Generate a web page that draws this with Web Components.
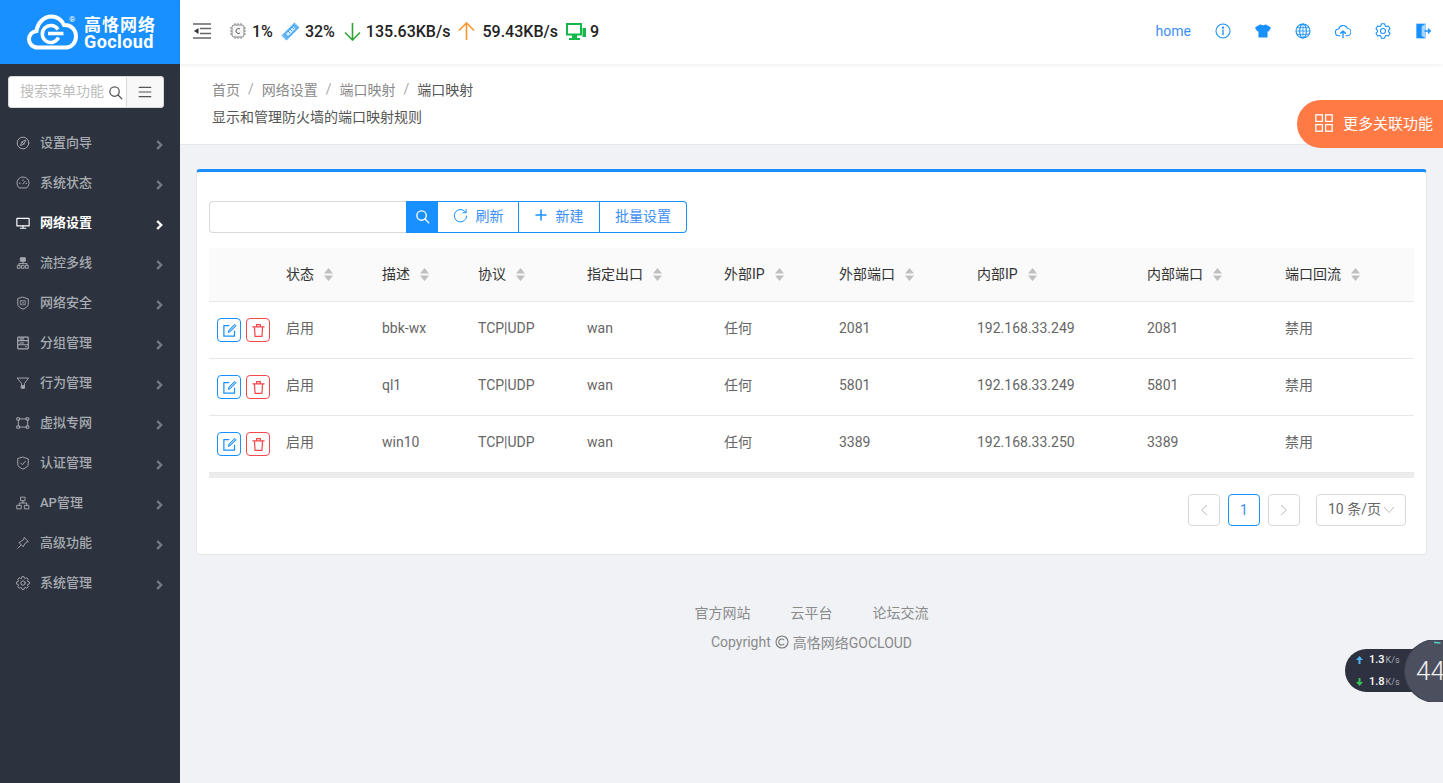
<!DOCTYPE html>
<html lang="zh"><head><meta charset="utf-8"><title>端口映射</title>
<style>
html,body{margin:0;height:783px;overflow:hidden;background:#f0f2f6;font-family:Roboto,"Noto Sans CJK SC",sans-serif;}
</style></head><body>
<gc-app></gc-app>
<script>
const FONT='Roboto,"Noto Sans CJK SC",sans-serif';
function el(name,html){customElements.define(name,class extends HTMLElement{constructor(){super();this.attachShadow({mode:'open'}).innerHTML=typeof html==='function'?html(this):html;}});}
const svg=(p,s=16,vb=24,extra='')=>`<svg width="${s}" height="${s}" viewBox="0 0 ${vb} ${vb}" fill="none" stroke="currentColor" stroke-width="1.6" stroke-linecap="round" stroke-linejoin="round" ${extra}>${p}</svg>`;
function cog(n,ri,ro,hole){let d='';for(let i=0;i<n;i++){const a=i*2*Math.PI/n-Math.PI/2,w=Math.PI/n;[[ri,a-w*.8],[ro,a-w*.42],[ro,a+w*.42],[ri,a+w*.8]].forEach(([r,t],j)=>{d+=(d?'L':'M')+(12+r*Math.cos(t)).toFixed(2)+' '+(12+r*Math.sin(t)).toFixed(2);});}return `<path d="${d}z"/><circle cx="12" cy="12" r="${hole}"/>`;}
const navIcons={
compass:'<circle cx="12" cy="12" r="10"/><path d="M16.5 7.5l-2.8 6.2-6.2 2.8 2.8-6.2z"/><path d="M10.3 10.3l3.4 3.4"/>',
gauge:'<path d="M5 20a10.500 10.500 0 1 1 14 0z"/><path d="M12 13.500l3.500-4.500M5.500 12.500h1.500M12 6.500v1.500M17 12.500h1.500"/>',
monitor:'<rect x="1.500" y="4" width="21" height="13" rx=".5" stroke-width="2"/><path d="M12 17v4M7.500 21h9" stroke-width="2"/>',
flow:'<rect x="8" y="3" width="8" height="6" fill="currentColor"/><path d="M12 9v4M5 16v-3h14v3"/><rect x="3" y="16" width="4" height="5"/><rect x="10" y="16" width="4" height="5"/><rect x="17" y="16" width="4" height="5"/>',
shield:'<path d="M12 2l9 3v9c0 4-4 6.500-9 8.500C7 20.500 3 18 3 14V5z"/><path d="M8 8h8v7H8z" stroke-width="1.200"/><path d="M10 10l4 3M14 10l-4 3" stroke-width="1"/>',
group:'<rect x="3" y="2" width="18" height="20" rx="1" stroke-width="2"/><path d="M3 8h18M3 15h18M7 5h6M7 12h6" stroke-width="2"/><path d="M16 18.500h2"/>',
filter:'<path d="M2.500 3.500h19L14.500 13v4h-5v-4z"/><rect x="9.500" y="17" width="5" height="4" fill="currentColor"/>',
vpn:'<rect x="2" y="3" width="4" height="4"/><rect x="18" y="3" width="4" height="4"/><rect x="2" y="17" width="4" height="4"/><rect x="18" y="17" width="4" height="4"/><path d="M6 5h12M6 19h12M4 7v10M20 7v10"/>',
check:'<path d="M12 2l9 3v9c0 4-4 6.500-9 8.500C7 20.500 3 18 3 14V5z"/><path d="M8 12l3 3 5-6"/>',
ap:'<rect x="8.500" y="2" width="7" height="6"/><rect x="2" y="16" width="7" height="6"/><rect x="15" y="16" width="7" height="6"/><path d="M12 8v4M5.500 16v-4h13v4"/>',
pin:'<path d="M14.500 3l6.500 6.500-4 1.500-3.500 5-1 2.500-7.500-7.500 2.500-1 5-3.500z"/><path d="M8 16l-5 5"/>',
gear:cog(8,8.500,11,3.800)
};
el('gc-logo',`<style>:host{display:flex;flex:none;align-items:center;gap:6px;height:64px;width:180px;background:#1890ff;color:#fff;font-family:${FONT};box-sizing:border-box;padding:0 0 0 27px;position:relative}
.t{display:flex;flex-direction:column;font-weight:700;margin-top:1px}.a{font-size:17px;letter-spacing:1px;line-height:18px;white-space:nowrap}.b{font-size:18px;line-height:15px;letter-spacing:.4px}
sup{position:absolute;font-size:8px;left:69px;top:15px;font-weight:400;line-height:10px;margin:0}</style>
<svg width="51" height="36" viewBox="0 0 51 36" fill="none" stroke="#fff" stroke-width="4"><path d="M10.500 33.500C5.500 33.500 2 29.500 2 25.500c0-4.500 3-7.800 7.500-8.500C10.500 9 17 2.500 24 2.500c5.800 0 10.500 3 13 8.500 6-.5 12 4 12 11.500 0 6-4.500 11-10 11z"/><path d="M31 15.500a8.500 8.500 0 1 0 .5 8" stroke-width="3.500"/><path d="M21 19.500h15.500" stroke-width="3.500"/></svg>
<sup>®</sup><div class="t"><span class="a">高恪网络</span><span class="b">Gocloud</span></div>`);
el('gc-search',`<style>:host{display:block;margin:12px 16px 15px 8px;height:32px;font-family:${FONT}}
.b{display:flex;height:32px;background:#fff;border:1px solid #d9d9d9;border-radius:3px;box-sizing:border-box;align-items:center;color:#555;overflow:hidden}
.p{font-size:14px;color:#bcbcbc;width:84px;overflow:hidden;white-space:nowrap;margin-left:11px;flex:none;line-height:26px;padding-bottom:2px;height:26px}
.i{width:22px;display:flex;justify-content:center;flex:none}.m{flex:1;display:flex;justify-content:center;align-items:center;border-left:1px solid #d9d9d9;height:100%;background:#f8f8f8}</style>
<div class="b"><span class="p">搜索菜单功能</span><span class="i">${svg('<circle cx="10.500" cy="10.500" r="7.500" stroke-width="2"/><path d="M16 16l6 6" stroke-width="2"/>',15)}</span><span class="m">${svg('<path d="M2 4h20M2 12h20M2 20h20" stroke-width="2"/>',14)}</span></div>`);
el('gc-nav-item',h=>`<style>:host{display:flex;align-items:center;height:40px;padding-left:16px;font-family:${FONT};font-size:13px;color:${h.hasAttribute('active')?'#fff':'#a8acb2'};font-weight:${h.hasAttribute('active')?700:500};box-sizing:border-box}
svg.ic{flex:none;margin-right:10px}span{flex:1;padding-bottom:3px}.c{color:${h.hasAttribute('active')?'#fff':'#767c84'};margin:4px 17px 0 0}</style>
${svg(navIcons[h.getAttribute('icon')],14,24,'class="ic"')}<span><slot></slot></span><svg class="c" width="7" height="10" viewBox="0 0 7 10" fill="none" stroke="currentColor" stroke-width="2.400"><path d="M1.200 1l4 4-4 4"/></svg>`);
el('gc-sidebar',`<style>:host{display:flex;flex-direction:column;width:180px;flex:none;height:783px;background:#2c333e}.n{display:flex;flex-direction:column}</style>
<gc-logo></gc-logo><gc-search></gc-search><div class="n">${[['compass','设置向导'],['gauge','系统状态'],['monitor','网络设置',1],['flow','流控多线'],['shield','网络安全'],['group','分组管理'],['filter','行为管理'],['vpn','虚拟专网'],['check','认证管理'],['ap','AP管理'],['pin','高级功能'],['gear','系统管理']].map(([i,t,a])=>`<gc-nav-item icon="${i}" ${a?'active':''}>${t}</gc-nav-item>`).join('')}</div>`);
el('gc-stat',`<style>:host{display:inline-flex;align-items:center;gap:5px;font-size:16px;font-weight:500;color:#222;white-space:nowrap}</style><slot name="i"></slot><slot></slot>`);
const blue='#1890ff';
const topIcons=[
'<circle cx="12" cy="12" r="10.500"/><path d="M12 10.500v7" stroke-width="2"/><circle cx="12" cy="7" r=".8" fill="currentColor"/>',
'<path d="M8 3l4 1.500L16 3l7 4-3 5-2-1v10H6V11l-2 1-3-5z" fill="currentColor"/>',
'<circle cx="12" cy="12" r="10.500"/><ellipse cx="12" cy="12" rx="5" ry="10.500"/><path d="M12 2v20M2 12h20M3.500 7h17M3.500 17h17" stroke-width="1.200"/>',
'<path d="M7.500 19H6a5 5 0 0 1-.6-10 7 7 0 0 1 13.200-1A5.500 5.500 0 0 1 18 19h-1.500"/><path d="M12 22v-10M8.500 15.500L12 12l3.500 3.500" stroke-width="2"/>',
cog(6,8.200,11,3.800),
'<path d="M2 1h14v22H2z" fill="currentColor" stroke="none"/><path d="M10 5l6-4v22l-6-4z" fill="#a9d6ff" stroke="none"/><path d="M15 12h8M20 9l3 3-3 3" stroke-width="2"/>'];
el('gc-topbar',`<style>:host{display:flex;align-items:center;height:64px;flex:none;background:#fff;box-shadow:0 1px 4px rgba(0,21,41,.08);position:relative;z-index:2;font-family:${FONT};padding:0 0 2px 13px;box-sizing:border-box}
.s{display:flex;align-items:center;gap:9px;margin-left:18px}.sp{flex:1}.h{font-size:14px;color:#3d8ff5;margin-right:12px}.r{display:flex;color:${blue}}.r>span{width:40px;display:flex;justify-content:center}</style>
<svg width="18" height="16" viewBox="0 0 18 16" fill="none" stroke="#666" stroke-width="1.700"><path d="M0 1h18M7 5.500h11M7 10.500h11M0 15h18"/><path d="M1 8l4.500-3v6z" fill="#333" stroke="none"/></svg>
<div class="s">
<gc-stat><svg slot="i" width="18" height="18" viewBox="0 0 18 18" fill="none" stroke="#888" stroke-width="1"><rect x="3" y="3" width="12" height="12" rx="2" fill="#f6f6f6"/><path d="M6 1v2M9 1v2M12 1v2M6 15v2M9 15v2M12 15v2M1 6h2M1 9h2M1 12h2M15 6h2M15 9h2M15 12h2"/><path d="M11 7a2.500 2.500 0 1 0 0 4" stroke="#555"/></svg>1%</gc-stat>
<gc-stat style="margin-left:-1px"><svg slot="i" width="19" height="19" viewBox="0 0 19 19"><path d="M13.500 .5L18.500 5.500 5.500 18.500.5 13.500z" fill="#59b0f7"/><path d="M12.500 4.500l2 2-7.500 7.500-2-2z" fill="#d8edff"/><path d="M7 9l2 2M9 7l2 2M11 5l2 2" stroke="#3a9bef" stroke-width="1"/><path d="M2.500 13.500l3 3M14.500 2.500l2 2" stroke="#d8edff" stroke-width=".8" stroke-dasharray="1 1"/></svg>32%</gc-stat>
<gc-stat style="gap:5px"><svg slot="i" width="17" height="19" viewBox="0 0 17 19" fill="none" stroke="#35a33a" stroke-width="1.600"><path d="M8.500 1v17M1 10.500l7.500 7.500 7.500-7.500"/></svg>135.63KB/s</gc-stat>
<gc-stat style="margin-left:-1px;gap:7px"><svg slot="i" width="17" height="19" viewBox="0 0 17 19" fill="none" stroke="#f7962b" stroke-width="1.600"><path d="M8.500 18V1M1 8.500L8.500 1 16 8.500"/></svg>59.43KB/s</gc-stat>
<gc-stat style="margin-left:-1px;gap:4px"><svg slot="i" width="20" height="17" viewBox="0 0 20 17"><path d="M1 1h14v10.500H1z" fill="none" stroke="#12b84a" stroke-width="2"/><path d="M16.500 5H20v9h-3.500zM3 15h11v2H3zM6 12h5v3H6z" fill="#12b84a"/></svg>9</gc-stat>
</div><span class="sp"></span><span class="h">home</span><div class="r">${topIcons.map(p=>`<span>${svg(p,16)}</span>`).join('')}</div>`);
el('gc-crumbs',`<style>:host{display:flex;flex-direction:column;flex:none;height:81px;box-sizing:border-box;background:#fff;border-bottom:1px solid #e6e6e6;padding:15px 0 0 32px;font-family:${FONT};font-size:14px;color:#8a8a8a;position:relative}
.l{display:flex;height:20px;align-items:center}i{font-style:normal;margin:0 8px;color:#aaa}.c{color:#555}.d{color:#555;margin-top:8px;height:20px;line-height:20px}</style>
<div class="l">首页<i>/</i>网络设置<i>/</i>端口映射<i>/</i><span class="c">端口映射</span></div><div class="d">显示和管理防火墙的端口映射规则</div>`);
el('gc-more',`<style>:host{position:absolute;right:0;top:100px;z-index:3;width:146px;height:48px;box-sizing:border-box;background:#ff7a45;color:#fff;border-radius:24px 0 0 24px;display:flex;align-items:center;padding:0 0 3px 18px;gap:10px;font:15px ${FONT};white-space:nowrap}</style>
<svg width="18" height="18" viewBox="0 0 18 18" fill="none" stroke="#fff" stroke-width="1.300"><rect x=".8" y=".8" width="6.600" height="6.600"/><rect x="10.600" y=".8" width="6.600" height="6.600"/><rect x=".8" y="10.600" width="6.600" height="6.600"/><rect x="10.600" y="10.600" width="6.600" height="6.600"/></svg>更多关联功能`);
el('gc-toolbar',`<style>:host{display:flex;height:32px;font:14px ${FONT};color:#3d8ff5;box-sizing:border-box}
.in{width:197px;border:1px solid #d9d9d9;border-right:0;border-radius:4px 0 0 4px;box-sizing:border-box;background:#fff}
.sb{width:32px;background:${blue};color:#fff;display:flex;align-items:center;justify-content:center;padding-bottom:2px;box-sizing:border-box}
.b{display:flex;align-items:center;justify-content:center;box-sizing:border-box;border:1px solid ${blue};border-left:0;height:32px;background:#fff;white-space:nowrap;padding-bottom:4px}.b svg{color:${blue}}.b:last-child{border-radius:0 4px 4px 0}</style>
<div class="in"></div><div class="sb">${svg('<circle cx="10.500" cy="10.500" r="7.500" stroke-width="2.200"/><path d="M16 16l6 6" stroke-width="2.200"/>',15)}</div>
<div class="b" style="width:81px;gap:8px">${svg('<path d="M20.500 7A10 10 0 1 0 22 13"/><path d="M21 2.500V7.500h-5" stroke-width="1.600"/>',15)}刷新</div>
<div class="b" style="width:81px;gap:9px">${svg('<path d="M12 2v20M2 12h20" stroke-width="3"/>',12)}新建</div>
<div class="b" style="width:87px">批量设置</div>`);
const cols='69px 96px 96px 109px 137px 115px 138px 170px 138px 137px';
el('gc-row',h=>`<style>:host{display:grid;grid-template-columns:${cols};align-items:center;height:57px;box-sizing:border-box;border-bottom:1px solid #e8e8e8;font:14px ${FONT};color:#666}
.c{padding:0 0 4px 8px;white-space:nowrap}.c.z{padding-bottom:6px}.a{display:flex;gap:5px;padding-left:8px}.b{width:24px;height:24px;box-sizing:border-box;border-radius:4px;border:1px solid;display:flex;align-items:center;justify-content:center}</style>
<div class="a"><span class="b" style="border-color:${blue};color:${blue}">${svg('<path d="M20 13v8H3V4h8" stroke-width="2"/><path d="M20.500 2.500l2 2L13 14l-3 1 1-3z" fill="#8ec8ff" stroke-width="1.500"/>',15)}</span><span class="b" style="border-color:#f5484d;color:#f5484d">${svg('<path d="M3 6h18M9 6V2.500h6V6M5.500 6l1 15.500h11l1-15.500" stroke-width="2"/>',15)}</span></div>
${h.getAttribute('v').split('|#').map(t=>`<div class="c${/[^\x00-\x7f]/.test(t)?' z':''}">${t}</div>`).join('')}`);
el('gc-table',`<style>:host{display:block;font:14px ${FONT}}
.h{display:grid;grid-template-columns:${cols};align-items:center;height:54px;box-sizing:border-box;background:#fafafa;border-bottom:1px solid #e8e8e8;color:#333}
.c{padding-left:8px;display:flex;align-items:center;gap:10px;white-space:nowrap}.c span{padding-bottom:3px}
.sc{height:5px;background:#ececec}
svg{flex:none}</style>
<div class="h"><div></div>${['状态','描述','协议','指定出口','外部IP','外部端口','内部IP','内部端口','端口回流'].map(t=>`<div class="c"><span>${t}</span><svg width="9" height="13" viewBox="0 0 9 13" fill="#bfbfbf"><path d="M4.500 0L9 5.500H0zM0 7.500h9L4.500 13z"/></svg></div>`).join('')}</div>
<gc-row v="启用|#bbk-wx|#TCP|UDP|#wan|#任何|#2081|#192.168.33.249|#2081|#禁用"></gc-row>
<gc-row v="启用|#ql1|#TCP|UDP|#wan|#任何|#5801|#192.168.33.249|#5801|#禁用"></gc-row>
<gc-row v="启用|#win10|#TCP|UDP|#wan|#任何|#3389|#192.168.33.250|#3389|#禁用"></gc-row>
<div class="sc"></div>`);
el('gc-pager',`<style>:host{display:flex;justify-content:flex-end;align-items:center;margin-top:16px;padding-right:8px;gap:8px;font:14px ${FONT};color:#666}
.b{width:32px;height:32px;box-sizing:border-box;border:1px solid #d9d9d9;border-radius:4px;display:flex;align-items:center;justify-content:center;color:#bbb}.on{border-color:${blue};color:#3d8ff5}
.s{width:90px;height:32px;box-sizing:border-box;border:1px solid #d9d9d9;border-radius:4px;display:flex;align-items:center;padding:0 0 5px 11px;gap:2px;margin-left:8px;color:#666;white-space:nowrap}.s svg{position:relative;top:2px}</style>
<div class="b"><svg width="8" height="12" viewBox="0 0 8 12" fill="none" stroke="currentColor"><path d="M7 1L1.500 6 7 11"/></svg></div><div class="b on">1</div><div class="b"><svg width="8" height="12" viewBox="0 0 8 12" fill="none" stroke="currentColor"><path d="M1 1l5.500 5L1 11"/></svg></div>
<div class="s">10 条/页<svg width="12" height="8" viewBox="0 0 12 8" fill="none" stroke="#bbb"><path d="M1 1l5 5.500L11 1"/></svg></div>`);
el('gc-card',`<style>:host{display:block;margin:24px 16px 0;height:386px;box-sizing:border-box;background:#fff;border:1px solid #e8e8e8;border-top:3px solid ${blue};border-radius:4px;padding:29px 12px 0}
gc-table{margin-top:15px}</style><gc-toolbar></gc-toolbar><gc-table></gc-table><gc-pager></gc-pager>`);
el('gc-footer',`<style>:host{display:flex;flex-direction:column;align-items:center;margin-top:48px;font:14px ${FONT};color:#8a8a8a}
.l{display:flex;gap:40px;height:20px;line-height:20px}.c{display:flex;align-items:center;gap:4px;margin-top:9px;height:20px;white-space:nowrap}</style>
<div class="l"><span>官方网站</span><span>云平台</span><span>论坛交流</span></div>
<div class="c"><span>Copyright</span><svg width="14" height="14" viewBox="0 0 14 14" fill="none" stroke="#777" stroke-width="1.100"><circle cx="7" cy="7" r="6"/><path d="M9.200 5.300a3 3 0 1 0 0 3.400"/></svg><span>高恪网络GOCLOUD</span></div>`);
el('gc-speed',`<style>:host{position:absolute;left:1345px;top:640px;width:98px;height:62px;z-index:3;font-family:${FONT};overflow:hidden}
.p{position:absolute;left:0;top:9px;width:90px;height:43px;background:#2e313f;border-radius:22px;color:#fff;font-size:11px;font-weight:500;box-sizing:border-box}
.r{position:absolute;left:11px;display:flex;align-items:center;gap:6px;height:21px;white-space:nowrap}.r small{font-size:9px;color:#a8abb5;margin-left:-5px;font-weight:400}
.k{position:absolute;left:60px;top:0;width:62px;height:62px;border-radius:50%;background:#4b4f5e;box-shadow:0 0 0 1px #3d404e;color:#f2f2f2;font-size:26px;font-weight:300;display:flex;align-items:center;padding-left:11px;box-sizing:border-box}
svg.a{position:absolute;left:60px;top:0}</style>
<div class="p"><div class="r" style="top:0"><svg width="7" height="8" viewBox="0 0 7 8" fill="#4fb4f5"><path d="M3.500 0L7 4H4.500v4h-2V4H0z"/></svg><span>1.3</span><small>K/s</small></div><div class="r" style="top:22px"><svg width="7" height="8" viewBox="0 0 7 8" fill="#37c25a"><path d="M3.500 8L7 4H4.500V0h-2v4H0z"/></svg><span>1.8</span><small>K/s</small></div></div>
<div class="k">44</div><svg class="a" width="62" height="62" viewBox="0 0 62 62" fill="none" stroke="#4fd6c6" stroke-width="1.500"><path d="M29 2.500a28 28 0 0 1 6.500 .5"/></svg>`);
el('gc-app',`<style>:host{display:flex;width:1443px;height:783px;position:relative;overflow:hidden}.m{flex:1;display:flex;flex-direction:column;min-width:0;background:#f0f2f6}</style>
<gc-sidebar></gc-sidebar><div class="m"><gc-topbar></gc-topbar><gc-crumbs></gc-crumbs><gc-card></gc-card><gc-footer></gc-footer></div><gc-more></gc-more><gc-speed></gc-speed>`);
</script></body></html>
